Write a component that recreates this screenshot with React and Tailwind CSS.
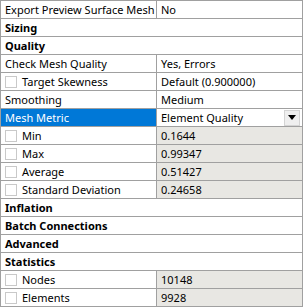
import React from 'react';

const rows = [
  { label: 'Export Preview Surface Mesh', value: 'No' },
  { header: 'Sizing' },
  { header: 'Quality' },
  { label: 'Check Mesh Quality', value: 'Yes, Errors' },
  { label: 'Target Skewness', value: 'Default (0.900000)', check: true },
  { label: 'Smoothing', value: 'Medium' },
  { label: 'Mesh Metric', value: 'Element Quality', selected: true },
  { label: 'Min', value: '0.1644', check: true, ro: true },
  { label: 'Max', value: '0.99347', check: true, ro: true },
  { label: 'Average', value: '0.51427', check: true, ro: true },
  { label: 'Standard Deviation', value: '0.24658', check: true, ro: true },
  { header: 'Inflation' },
  { header: 'Batch Connections' },
  { header: 'Advanced' },
  { header: 'Statistics' },
  { label: 'Nodes', value: '10148', check: true, ro: true },
  { label: 'Elements', value: '9928', check: true, ro: true },
];

const Check = () => (
  <span className="ml-[3px] mr-[5px] inline-block h-[12px] w-[12px] shrink-0 border border-[#c9c9c9] bg-white" />
);

const Row = ({ row }) => {
  if (row.header) {
    return (
      <div className="flex h-[18px] items-center border-b border-[#a0a0a0] bg-white pl-[4px] font-bold">
        {row.header}
      </div>
    );
  }
  return (
    <div className="flex h-[18px] border-b border-[#a0a0a0]">
      <div
        className={`flex w-[156px] shrink-0 items-center overflow-hidden whitespace-nowrap border-r border-[#a0a0a0] ${
          row.selected ? 'bg-[#0078d7] text-white' : 'bg-white'
        } ${row.check ? 'pl-[1px]' : 'pl-[4px]'}`}
      >
        {row.check && <Check />}
        {row.label}
      </div>
      <div
        className={`flex flex-1 items-center whitespace-nowrap pl-[4px] ${row.ro ? 'bg-[#e8e7e3]' : 'bg-white'}`}
      >
        <span className="flex-1">{row.value}</span>
        {row.selected && (
          <span className="mr-[2px] flex h-[16px] w-[16px] items-center justify-center border border-[#d4d4d4] bg-[#efefef]">
            <svg width="8" height="5" viewBox="0 0 8 5">
              <path d="M0 0h8L4 5z" fill="#000" />
            </svg>
          </span>
        )}
      </div>
    </div>
  );
};

export default function App() {
  return (
    <div className="h-[307px] w-[303px] bg-white">
      <div
        className="w-[303px] border-x border-t border-[#a0a0a0] text-[11px] leading-none text-black"
        style={{ fontFamily: '"Noto Sans", "Open Sans", sans-serif' }}
      >
        {rows.map((r, i) => (
          <Row key={i} row={r} />
        ))}
      </div>
    </div>
  );
}
